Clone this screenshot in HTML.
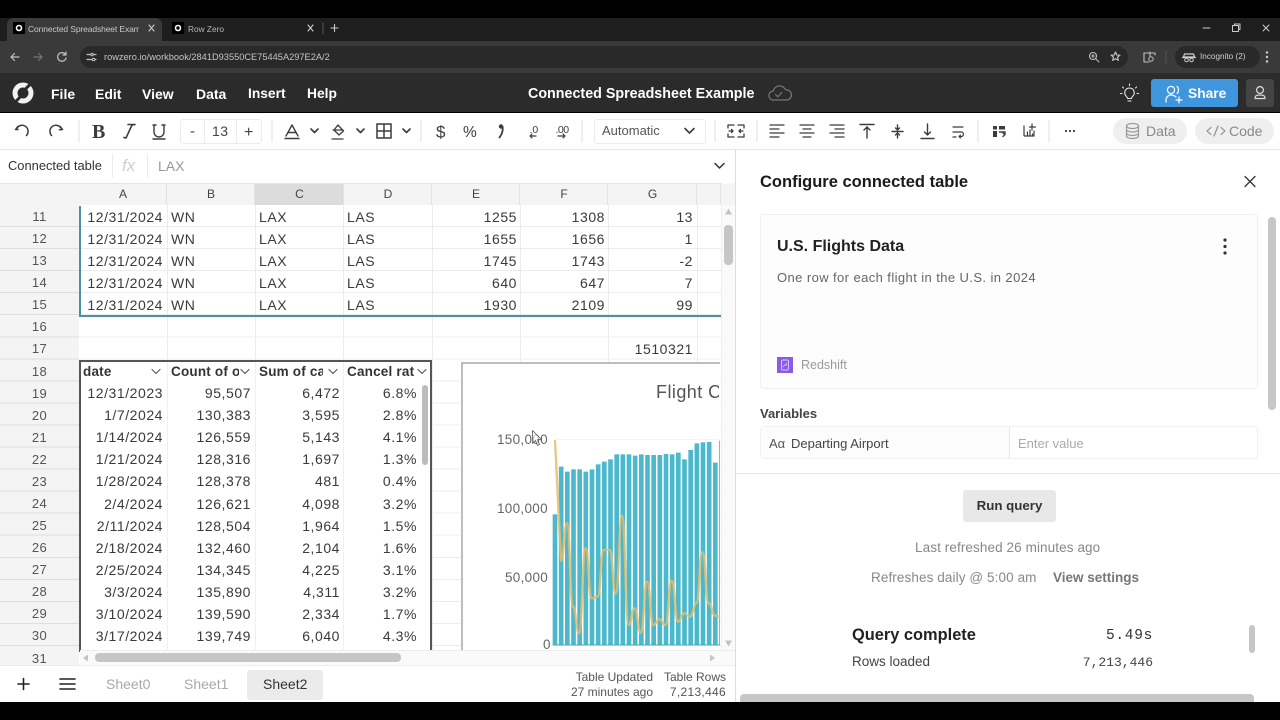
<!DOCTYPE html>
<html><head><meta charset="utf-8">
<style>
html,body{margin:0;padding:0;background:#000;width:1280px;height:720px;overflow:hidden}
#p{position:relative;width:1280px;height:720px;overflow:hidden;background:#000;font-family:"Liberation Sans",sans-serif;color:#333}
.b{position:absolute}
.t{position:absolute;white-space:nowrap;line-height:20px;height:20px}
.w{color:#fff;font-weight:bold;font-size:14px}
.row{position:absolute;left:0;width:721px;height:22px;font-size:14px;letter-spacing:.55px;color:#3a3a3a}
.row span{position:absolute;top:1px;line-height:20px;white-space:nowrap}
.row .n{left:0;width:79px;text-align:center;font-size:13px;letter-spacing:.4px;color:#555}
.row .n2{top:2px}
.ra{right:558px}.rb{right:470px}.rc{right:381px}.rd{right:304px}
.re{right:204px}.rf{right:116px}.rg{right:28px}
.lb{left:171px}.lc{left:259px}.ld{left:347px}
.ch{position:absolute;top:184px;height:21px;line-height:21px;text-align:center;font-size:12px;color:#444;background:#f4f4f4;border-right:1px solid #e2e2e2;box-sizing:border-box;padding-left:1px}
.hd{font-weight:bold;font-size:13.5px;letter-spacing:.2px;color:#333;overflow:hidden}
svg{position:absolute;left:0;top:0}
</style></head><body><div id="p">

<!-- browser chrome -->
<div class="b" style="left:0;top:18px;width:1280px;height:23px;background:#1e1e1e"></div>
<div class="b" style="left:7px;top:18px;width:155px;height:24px;background:#3a3a3a;border-radius:7px 7px 0 0"></div>
<div class="b" style="left:0;top:41px;width:1280px;height:32px;background:#3a3a3a"></div>
<div class="b" style="left:80px;top:46px;width:1048px;height:22px;background:#292929;border-radius:11px"></div>
<div class="b" style="left:1175px;top:46px;width:85px;height:22px;background:#292929;border-radius:11px"></div>
<div class="b" style="left:13px;top:22px;width:12px;height:12px;background:#000"></div>
<div class="b" style="left:172px;top:22px;width:12px;height:12px;background:#000"></div>
<div class="t" style="left:28px;top:19px;font-size:8.5px;letter-spacing:-.12px;color:#c8c8c8;width:111px;overflow:hidden">Connected Spreadsheet Example</div>
<div class="t" style="left:188px;top:19px;font-size:8.3px;color:#b8b8b8">Row Zero</div>
<div class="t" style="left:104px;top:47px;font-size:9.25px;color:#c4c4c4">rowzero.io/workbook/2841D93550CE75445A297E2A/2</div>
<div class="t" style="left:1200px;top:47px;font-size:8.2px;color:#cfcfcf">Incognito (2)</div>

<!-- app header -->
<div class="b" style="left:0;top:73px;width:1280px;height:39px;background:#2b2b2b"></div>
<div class="t w" style="left:51px;top:84px">File</div>
<div class="t w" style="left:95px;top:84px">Edit</div>
<div class="t w" style="left:142px;top:84px">View</div>
<div class="t w" style="left:196px;top:84px">Data</div>
<div class="t w" style="left:248px;top:84px;font-size:13.8px">Insert</div>
<div class="t w" style="left:307px;top:84px;font-size:13.8px">Help</div>
<div class="t w" style="left:528px;top:84px;font-size:14.3px">Connected Spreadsheet Example</div>
<div class="b" style="left:1151px;top:79px;width:87px;height:28px;background:#3f96dc;border-radius:3px"></div>
<div class="t w" style="left:1188px;top:84px;font-size:13.8px">Share</div>
<div class="b" style="left:1246px;top:79px;width:28px;height:28px;background:#444;border-radius:3px"></div>

<!-- toolbar -->
<div class="b" style="left:0;top:113px;width:1280px;height:36px;background:#fff;border-bottom:1px solid #e6e6e6"></div>
<div class="b" style="left:180px;top:119px;width:80px;height:23px;border:1px solid #ececec;border-radius:3px"></div>
<div class="b" style="left:204px;top:119px;width:1px;height:25px;background:#ececec"></div>
<div class="b" style="left:236px;top:119px;width:1px;height:25px;background:#ececec"></div>
<div class="t" style="left:190px;top:122px;font-size:15px;color:#444">-</div>
<div class="t" style="left:212px;top:121px;font-size:14px;letter-spacing:.5px;color:#444">13</div>
<div class="t" style="left:244px;top:123px;font-size:16px;color:#444">+</div>
<div class="b" style="left:594px;top:119px;width:110px;height:23px;border:1px solid #ececec;border-radius:3px"></div>
<div class="t" style="left:602px;top:121px;font-size:13px;color:#555">Automatic</div>
<div class="b" style="left:1113px;top:118px;width:74px;height:26px;background:#efefef;border-radius:13px"></div>
<div class="b" style="left:1195px;top:118px;width:79px;height:26px;background:#efefef;border-radius:13px"></div>
<div class="t" style="left:1146px;top:121px;font-size:14px;color:#888">Data</div>
<div class="t" style="left:1229px;top:121px;font-size:14px;color:#888">Code</div>

<!-- formula bar -->
<div class="b" style="left:0;top:150px;width:735px;height:33px;background:#fff"></div>
<div class="t" style="left:8px;top:156px;font-size:12.9px;color:#333">Connected table</div>
<div class="t" style="left:122px;top:156px;font-size:17px;font-style:italic;color:#cfcfcf">fx</div>
<div class="t" style="left:158px;top:156px;font-size:14px;color:#999">LAX</div>
<div class="b" style="left:112px;top:154px;width:1px;height:24px;background:#ececec"></div>
<div class="b" style="left:147px;top:154px;width:1px;height:24px;background:#ececec"></div>

<!-- grid -->
<div class="b" style="left:0;top:183px;width:735px;height:482px;background:#fff"></div>
<div class="b" style="left:0;top:183px;width:721px;height:1px;background:#e4e4e4"></div>
<div class="b" style="left:0;top:184px;width:735px;height:21px;background:#f4f4f4"></div>
<div class="b" style="left:0;top:205px;width:79px;height:460px;background:repeating-linear-gradient(to bottom,#f4f4f4 0,#f4f4f4 21.05px,#dedede 21.05px,#dedede 22.05px)"></div>
<div class="b" style="left:80px;top:205px;width:641px;height:445px;background:repeating-linear-gradient(to bottom,#fff 0,#fff 21.05px,#ececec 21.05px,#ececec 22.05px)"></div>
<div class="b" style="left:167px;top:205px;width:1px;height:445px;background:#ececec"></div>
<div class="b" style="left:255px;top:205px;width:1px;height:445px;background:#ececec"></div>
<div class="b" style="left:343px;top:205px;width:1px;height:445px;background:#ececec"></div>
<div class="b" style="left:432px;top:205px;width:1px;height:445px;background:#ececec"></div>
<div class="b" style="left:520px;top:205px;width:1px;height:445px;background:#ececec"></div>
<div class="b" style="left:608px;top:205px;width:1px;height:445px;background:#ececec"></div>
<div class="b" style="left:697px;top:205px;width:1px;height:445px;background:#ececec"></div>

<div class="ch" style="left:79px;width:88px">A</div>
<div class="ch" style="left:167px;width:88px">B</div>
<div class="ch" style="left:255px;width:89px;background:#dcdcdc">C</div>
<div class="ch" style="left:344px;width:88px">D</div>
<div class="ch" style="left:432px;width:88px">E</div>
<div class="ch" style="left:520px;width:88px">F</div>
<div class="ch" style="left:608px;width:89px">G</div>
<div class="ch" style="left:697px;width:24px"></div>

<div class="row" style="top:206px"><span class="n">11</span><span class="ra">12/31/2024</span><span class="lb">WN</span><span class="lc">LAX</span><span class="ld">LAS</span><span class="re">1255</span><span class="rf">1308</span><span class="rg">13</span></div>
<div class="row" style="top:228px"><span class="n">12</span><span class="ra">12/31/2024</span><span class="lb">WN</span><span class="lc">LAX</span><span class="ld">LAS</span><span class="re">1655</span><span class="rf">1656</span><span class="rg">1</span></div>
<div class="row" style="top:250px"><span class="n">13</span><span class="ra">12/31/2024</span><span class="lb">WN</span><span class="lc">LAX</span><span class="ld">LAS</span><span class="re">1745</span><span class="rf">1743</span><span class="rg">-2</span></div>
<div class="row" style="top:272px"><span class="n">14</span><span class="ra">12/31/2024</span><span class="lb">WN</span><span class="lc">LAX</span><span class="ld">LAS</span><span class="re">640</span><span class="rf">647</span><span class="rg">7</span></div>
<div class="row" style="top:294px"><span class="n">15</span><span class="ra">12/31/2024</span><span class="lb">WN</span><span class="lc">LAX</span><span class="ld">LAS</span><span class="re">1930</span><span class="rf">2109</span><span class="rg">99</span></div>
<div class="row" style="top:316px"><span class="n">16</span></div>
<div class="row" style="top:338px"><span class="n">17</span><span class="rg">1510321</span></div>

<div class="b" style="left:79px;top:206px;width:2px;height:110px;background:#4f8fa3"></div>
<div class="b" style="left:79px;top:315px;width:642px;height:2px;background:#4f8fa3"></div>

<!-- pivot table -->
<div class="b" style="left:80px;top:361px;width:352px;height:289px;background:#fff"></div>
<div class="b" style="left:167px;top:361px;width:1px;height:289px;background:#f0f0f0"></div>
<div class="b" style="left:255px;top:361px;width:1px;height:289px;background:#f0f0f0"></div>
<div class="b" style="left:343px;top:361px;width:1px;height:289px;background:#f0f0f0"></div>
<div class="row" style="top:361px"><span class="n">18</span><span class="hd" style="left:83px">date</span><span class="hd" style="left:171px;width:68px">Count of o</span><span class="hd" style="left:259px;width:64px">Sum of car</span><span class="hd" style="left:347px;width:68px">Cancel rat</span></div>
<div class="row" style="top:382px"><span class="n n2">19</span><span class="ra">12/31/2023</span><span class="rb">95,507</span><span class="rc">6,472</span><span class="rd">6.8%</span></div>
<div class="row" style="top:404px"><span class="n n2">20</span><span class="ra">1/7/2024</span><span class="rb">130,383</span><span class="rc">3,595</span><span class="rd">2.8%</span></div>
<div class="row" style="top:426px"><span class="n n2">21</span><span class="ra">1/14/2024</span><span class="rb">126,559</span><span class="rc">5,143</span><span class="rd">4.1%</span></div>
<div class="row" style="top:448px"><span class="n n2">22</span><span class="ra">1/21/2024</span><span class="rb">128,316</span><span class="rc">1,697</span><span class="rd">1.3%</span></div>
<div class="row" style="top:470px"><span class="n n2">23</span><span class="ra">1/28/2024</span><span class="rb">128,378</span><span class="rc">481</span><span class="rd">0.4%</span></div>
<div class="row" style="top:493px"><span class="n">24</span><span class="ra">2/4/2024</span><span class="rb">126,621</span><span class="rc">4,098</span><span class="rd">3.2%</span></div>
<div class="row" style="top:515px"><span class="n">25</span><span class="ra">2/11/2024</span><span class="rb">128,504</span><span class="rc">1,964</span><span class="rd">1.5%</span></div>
<div class="row" style="top:537px"><span class="n">26</span><span class="ra">2/18/2024</span><span class="rb">132,460</span><span class="rc">2,104</span><span class="rd">1.6%</span></div>
<div class="row" style="top:559px"><span class="n">27</span><span class="ra">2/25/2024</span><span class="rb">134,345</span><span class="rc">4,225</span><span class="rd">3.1%</span></div>
<div class="row" style="top:581px"><span class="n">28</span><span class="ra">3/3/2024</span><span class="rb">135,890</span><span class="rc">4,311</span><span class="rd">3.2%</span></div>
<div class="row" style="top:603px"><span class="n">29</span><span class="ra">3/10/2024</span><span class="rb">139,590</span><span class="rc">2,334</span><span class="rd">1.7%</span></div>
<div class="row" style="top:625px"><span class="n">30</span><span class="ra">3/17/2024</span><span class="rb">139,749</span><span class="rc">6,040</span><span class="rd">4.3%</span></div>
<div class="row" style="top:648px"><span class="n">31</span></div>
<div class="b" style="left:79px;top:360px;width:349px;height:290px;border:2px solid #555;border-bottom:0;border-left-width:2px"></div>
<div class="b" style="left:422px;top:385px;width:6px;height:80px;background:#bcbcbc;border-radius:3px"></div>

<!-- chart -->
<div class="b" style="left:461px;top:362px;width:259px;height:288px;background:#fff;border-left:2px solid #bdbdbd;border-top:2px solid #bdbdbd;box-sizing:border-box"></div>
<div class="b" style="left:461px;top:363px;width:258px;height:287px;overflow:hidden">
<div class="t" style="left:195px;top:19px;font-size:18px;letter-spacing:.45px;color:#555">Flight C</div>
</div>
<div class="t" style="left:497px;top:430px;font-size:13.5px;letter-spacing:.3px;color:#666">150,000</div>
<div class="t" style="left:497px;top:499px;font-size:13.5px;letter-spacing:.3px;color:#666">100,000</div>
<div class="t" style="left:505px;top:568px;font-size:13.5px;letter-spacing:.3px;color:#666">50,000</div>
<div class="t" style="left:543px;top:635px;font-size:13.5px;letter-spacing:.3px;color:#666">0</div>
<svg class="chart" style="left:440px;top:350px" width="280" height="310" viewBox="0 0 840 930">
<line x1="345" y1="269" x2="840" y2="269" stroke="#eee" stroke-width="2"/>
<path fill="#4cb8cc" d="M338 885V493h14V885zM356.500 885V350h14V885zM375 885V365h14V885zM393.500 885V358h14V885zM412 885V358h14V885zM430.500 885V365h14V885zM449 885V358h14V885zM467.500 885V343h14V885zM486 885V335h14V885zM504.500 885V328h14V885zM523 885V313h14V885zM541.500 885V313h14V885zM560 885V313h14V885zM578.500 885V317h14V885zM597 885V313h14V885zM615.500 885V315h14V885zM634 885V315h14V885zM652.500 885V315h14V885zM671 885V312h14V885zM689.500 885V313h14V885zM708 885V308h14V885zM726.500 885V328h14V885zM745 885V300h14V885zM763.500 885V280h14V885zM782 885V277h14V885zM800.500 885V276h14V885zM819 885V338h14V885zM837.500 885V272h14V885z"/>
<line x1="338" y1="885" x2="840" y2="885" stroke="#3ba9bd" stroke-width="3"/>
<path fill="none" stroke="#e9bb68" stroke-opacity=".85" stroke-width="7" stroke-linejoin="round" d="M345 270L363 632C372 632 372 520 381 520C390 520 390 770 399 770C408 770 408 850 417 850C427 850 427 595 437 595C446 595 446 745 455 745C464 745 464 740 473 740C482 740 482 600 491 600C500 600 500 600 509 600C518 600 518 730 527 730C537 730 537 497 546 497C556 497 556 825 566 825C575 825 575 775 584 775C593 775 593 848 602 848C612 848 612 695 621 695C631 695 631 825 640 825C649 825 649 808 658 808C667 808 667 825 676 825C686 825 686 692 695 692C705 692 705 815 714 815C723 815 723 790 732 790C741 790 741 800 750 800C760 800 760 760 769 760C778 760 778 607 787 607C797 607 797 760 806 760C816 760 816 797 825 797L840 800"/>
</svg>

<!-- grid scrollbars -->
<div class="b" style="left:721px;top:183px;width:14px;height:482px;background:#fafafa;border-left:1px solid #eee;box-sizing:border-box"></div>
<div class="b" style="left:721px;top:184px;width:14px;height:21px;background:#f4f4f4"></div>
<div class="b" style="left:724px;top:225px;width:9px;height:40px;background:#c6c6c6;border-radius:4px"></div>
<div class="b" style="left:80px;top:650px;width:655px;height:15px;background:#fafafa;border-top:1px solid #ececec;box-sizing:border-box"></div>
<div class="b" style="left:95px;top:653px;width:306px;height:9px;background:#c6c6c6;border-radius:4px"></div>

<!-- status bar -->
<div class="b" style="left:0;top:665px;width:735px;height:37px;background:#fff;border-top:1px solid #eee;box-sizing:border-box"></div>
<div class="b" style="left:247px;top:670px;width:76px;height:30px;background:#ebebeb;border-radius:3px"></div>
<div class="t" style="left:106px;top:674px;font-size:14px;color:#a8a8a8">Sheet0</div>
<div class="t" style="left:184px;top:674px;font-size:14px;color:#a8a8a8">Sheet1</div>
<div class="t" style="left:263px;top:674px;font-size:14px;color:#333">Sheet2</div>
<div class="t" style="left:500px;width:153px;text-align:right;top:667px;font-size:12px;color:#555">Table Updated</div>
<div class="t" style="left:500px;width:153px;text-align:right;top:682px;font-size:12px;color:#555">27 minutes ago</div>
<div class="t" style="left:600px;width:126px;text-align:right;top:667px;font-size:12px;color:#555">Table Rows</div>
<div class="t" style="left:600px;width:126px;text-align:right;top:682px;font-size:12px;letter-spacing:.3px;color:#555">7,213,446</div>

<!-- right panel -->
<div class="b" style="left:735px;top:150px;width:545px;height:552px;background:#fff;border-left:1px solid #ddd;box-sizing:border-box"></div>
<div class="t" style="left:760px;top:172px;font-size:16.5px;font-weight:bold;color:#1a1a1a">Configure connected table</div>
<div class="b" style="left:760px;top:214px;width:498px;height:175px;background:#fdfdfd;border:1px solid #f0f0f0;border-radius:4px;box-sizing:border-box"></div>
<div class="t" style="left:777px;top:237px;font-size:16px;font-weight:bold;color:#222">U.S. Flights Data</div>
<div class="t" style="left:777px;top:268px;font-size:13px;letter-spacing:.41px;color:#666">One row for each flight in the U.S. in 2024</div>
<div class="b" style="left:777px;top:357px;width:16px;height:16px;background:#8a5ce6"></div>
<div class="t" style="left:801px;top:355px;font-size:12.5px;color:#999">Redshift</div>
<div class="t" style="left:760px;top:404px;font-size:13px;font-weight:bold;color:#444">Variables</div>
<div class="b" style="left:760px;top:426px;width:498px;height:33px;background:#fff;border:1px solid #f0f0f0;border-radius:4px;box-sizing:border-box"></div>
<div class="b" style="left:761px;top:427px;width:248px;height:31px;background:#fcfcfc;border-right:1px solid #e8e8e8"></div>
<div class="t" style="left:769px;top:434px;font-size:13px;color:#555">Aα</div>
<div class="t" style="left:791px;top:434px;font-size:13px;color:#444">Departing Airport</div>
<div class="t" style="left:1018px;top:434px;font-size:13px;color:#aaa">Enter value</div>
<div class="b" style="left:736px;top:473px;width:544px;height:1px;background:#e6e6e6"></div>
<div class="b" style="left:963px;top:490px;width:93px;height:32px;background:#e8e8e8;border-radius:3px"></div>
<div class="t" style="left:963px;width:93px;text-align:center;top:496px;font-size:13.3px;font-weight:bold;color:#333">Run query</div>
<div class="t" style="left:915px;top:538px;font-size:13.5px;letter-spacing:.1px;color:#888">Last refreshed 26 minutes ago</div>
<div class="t" style="left:871px;top:568px;font-size:13.5px;letter-spacing:.1px;color:#888">Refreshes daily @ 5:00 am</div>
<div class="t" style="left:1053px;top:568px;font-size:13.5px;font-weight:bold;color:#777">View settings</div>
<div class="t" style="left:852px;top:625px;font-size:16.4px;font-weight:bold;color:#222">Query complete</div>
<div class="t" style="left:1053px;width:100px;text-align:right;top:626px;font-size:14.5px;letter-spacing:.7px;font-family:'Liberation Mono',monospace;color:#333">5.49s</div>
<div class="t" style="left:852px;top:652px;font-size:13.5px;color:#444">Rows loaded</div>
<div class="t" style="left:1053px;width:100px;text-align:right;top:653px;font-size:13px;font-family:'Liberation Mono',monospace;color:#444">7,213,446</div>
<div class="b" style="left:1268px;top:217px;width:8px;height:193px;background:#c6c6c6;border-radius:4px"></div>
<div class="b" style="left:1249px;top:625px;width:6px;height:28px;background:#c6c6c6;border-radius:3px"></div>
<div class="b" style="left:740px;top:694px;width:514px;height:8px;background:#c6c6c6;border-radius:4px 4px 0 0"></div>

<!-- icon overlay -->
<svg width="1280" height="720" viewBox="0 0 1280 720" fill="none" stroke-linecap="round" stroke-linejoin="round">
<!-- favicons -->
<circle cx="19" cy="28" r="2.500" stroke="#fff" stroke-width="1.600"/>
<circle cx="178" cy="28" r="2.500" stroke="#fff" stroke-width="1.600"/>
<!-- tab controls -->
<path d="M149 25l5 6m0-6l-5 6M308 25l5 6m0-6l-5 6M331 28h7M334.500 24.500v7" stroke="#ccc" stroke-width="1.100"/>
<path d="M323 23v11" stroke="#555"/>
<path d="M1203 28h7M1232.500 25.500h6v6h-6zM1234.500 25.500v-1.500h5.500v5.500h-1.500M1263 25l6 6m0-6l-6 6" stroke="#ccc" stroke-width="1"/>
<!-- nav -->
<path d="M19 57h-8m3.500-3.500L11 57l3.500 3.500" stroke="#c0c0c0" stroke-width="1.200"/>
<path d="M34 57h8m-3.500-3.500L42 57l-3.500 3.500" stroke="#777" stroke-width="1.200"/>
<path d="M65.500 54.500a4.300 4.300 0 1 0 .6 3.500M66 52v3h-3" stroke="#c0c0c0" stroke-width="1.200"/>
<path d="M87 54.500h3M93 54.500h3M87 59.500h5M95 59.500h1" stroke="#c0c0c0" stroke-width="1.200"/>
<circle cx="92" cy="54.500" r="1.300" stroke="#c0c0c0"/><circle cx="93.500" cy="59.500" r="1.300" stroke="#c0c0c0"/>
<circle cx="1093" cy="56" r="3.500" stroke="#c0c0c0" stroke-width="1.100"/>
<path d="M1096 59l3 3M1091.500 56h3M1093 54.500v3" stroke="#c0c0c0" stroke-width="1"/>
<path d="M1115.500 52l1.300 3 3.200.2-2.500 2 .9 3.200-2.900-1.700-2.900 1.700.9-3.200-2.500-2 3.200-.2z" stroke="#c8c8c8" stroke-width="1.100"/>
<path d="M1150 53h-6v9h5M1150 53h5v2M1150 52v4" stroke="#c0c0c0" stroke-width="1.100"/>
<circle cx="1151" cy="59" r="2.200" stroke="#c0c0c0"/>
<path d="M1166 51v12" stroke="#555"/>
<path d="M1184.500 54h9l1 3h-11zM1182.500 57.500h13" stroke="#cfcfcf" stroke-width="1.200"/>
<circle cx="1186.500" cy="60" r="1.800" stroke="#cfcfcf"/><circle cx="1191.500" cy="60" r="1.800" stroke="#cfcfcf"/>
<g fill="#ccc"><circle cx="1267" cy="52.500" r="1.200"/><circle cx="1267" cy="57" r="1.200"/><circle cx="1267" cy="61.500" r="1.200"/></g>

<!-- logo -->
<circle cx="23" cy="93" r="10.500" fill="#f2f2f2"/>
<circle cx="23" cy="93" r="5.500" fill="#2b2b2b"/>
<path d="M31.500 83.500C28 86 26 88 23.500 92c-2.500 4-4.500 7-8.500 10" stroke="#2b2b2b" stroke-width="3"/>
<!-- cloud -->
<path d="M775 100h-1.500a4.500 4.500 0 0 1-.3-9 6.500 6.500 0 0 1 12.300-1.200 5 5 0 0 1 1.500 10.200z" stroke="#777" stroke-width="1.200"/>
<path d="M775.500 94.500l2.300 2.300 4-4.300" stroke="#777" stroke-width="1.200"/>
<!-- bulb -->
<path d="M1129.500 88a4.800 4.800 0 0 0-3 8.500c.8.700 1 1.500 1 2h4c0-.5.200-1.300 1-2a4.800 4.800 0 0 0-3-8.500zM1128 101h3M1129.500 85.500v-1.500M1123.500 88l-1-1M1135.500 88l1-1M1122 93.500h-1.500M1138.500 93.500H1137" stroke="#e8e8e8" stroke-width="1.100"/>
<!-- share icon -->
<circle cx="1171" cy="90" r="3.600" stroke="#fff" stroke-width="1.200"/>
<path d="M1177 86.500c2 1 2 6 0 7M1166 102v-2c0-3 2.500-5 5-5s4 1 5 2M1176 100h6M1179 97v6" stroke="#fff" stroke-width="1.200"/>
<!-- user -->
<circle cx="1260" cy="90" r="3.400" stroke="#ddd" stroke-width="1.200"/>
<path d="M1255 98.500c0-2.500 1-3.500 5-3.500s5 1 5 3.500z" stroke="#ddd" stroke-width="1.200"/>

<!-- toolbar icons -->
<g stroke="#3c3c3c" stroke-width="1.500">
<path d="M18 127l-2.500 2.500 2.500 0M16 129c2-3.500 6-4.500 9-3 3.500 2 4 6.500 1.500 9.500"/>
<path d="M60 127l2.500 2.500-3 .3M62 129c-2-3.500-6-4.500-9-3-3.500 2-4 6.500-1.500 9.500"/>
<path d="M154 125v7a5 5 0 0 0 10 0v-7M153 125h3M162 125h3M153 139h12" stroke-width="1.400"/>
<path d="M124 137.500l2 .5 6-13 3-.5M128 124.500h7" stroke-width="1.600" stroke-linejoin="miter"/>
<path d="M286 136l6-11 6 11M288 132.500h8M285 138.500h14" stroke-width="1.400"/>
<path d="M311 129l3.500 3.500 3.500-3.500M357 129l3.500 3.500 3.500-3.500M403 129l3.500 3.500 3.500-3.500" stroke-width="1.600"/>
<path d="M338 125l5.500 6-4.500 4-5-5zM332 139h11M333 130h10" stroke-width="1.300"/>
<path d="M377 124h14v14h-14zM384 124v14M377 131h14" stroke-width="1.500" stroke-linejoin="miter"/>
<path d="M685 128.500l4.500 4.500 4.500-4.500" stroke-width="1.600"/>
<path d="M728 128v-3h6M744 128v-3h-6M728 134v3h6M744 134v3h-6M729 131h4m-1.500-1.500l1.500 1.500-1.500 1.500M743 131h-4m1.500-1.500l-1.500 1.500 1.500 1.500" stroke-width="1.300"/>
<path d="M770 125h14M770 129h9M770 133h14M770 137h9M800 125h14M803 129h8M800 133h14M803 137h8M830 125h14M835 129h9M830 133h14M835 137h9" stroke-width="1.300"/>
<path d="M860 124.500h14M867 138v-11m-3 3l3-3 3 3M892 131.500h11M897.500 125v5m-2-2l2 2 2-2M897.500 138v-5m-2 2l2-2 2 2M921 138.500h13M927.500 124v11m-3-3l3 3 3-3" stroke-width="1.400"/>
<path d="M953 127h10M953 132h8.500c2.500 0 2.500 4.500 0 4.500h-2.500m1.500-1.500l-1.500 1.500 1.500 1.500M953 137h3" stroke-width="1.200"/>
<path d="M1024 126v9a1 1 0 0 0 1 1h9v-5M1027.500 136v-4M1030 136v-6M1032.500 136v-2M1032 124v6M1029.500 127h6" stroke-width="1.200"/>
</g>
<g fill="#3c3c3c">
<text x="92" y="138" font-family="'Liberation Serif',serif" font-size="20" font-weight="bold">B</text>
<text x="436" y="137.500" font-family="'Liberation Sans',sans-serif" font-size="17">$</text>
<text x="463" y="137" font-family="'Liberation Sans',sans-serif" font-size="15.500">%</text>
<text x="529.500" y="133" font-family="'Liberation Sans',sans-serif" font-size="10.500">.0</text>
<text x="555.500" y="133" font-family="'Liberation Sans',sans-serif" font-size="10.500" letter-spacing="-.5">.00</text>
<rect x="993" y="126" width="4" height="3.500"/><rect x="999" y="126" width="6" height="3.500"/><rect x="993" y="131" width="4" height="6"/>
<circle cx="1066" cy="131" r="1.100"/><circle cx="1070" cy="131" r="1.100"/><circle cx="1074" cy="131" r="1.100"/>
<circle cx="501" cy="126.500" r="2.200"/>
</g>
<path d="M502.500 126.500c.8 4-.8 8-3 11" stroke="#3c3c3c" stroke-width="1.800"/>
<path d="M536 136h-6m2-2l-2 2 2 2M558 136h7m-2-2l2 2-2 2" stroke="#3c3c3c" stroke-width="1.200"/>
<path d="M999.500 132h5.500v2.500l-2 2m0-3.500l2 1.500" stroke="#3c3c3c" stroke-width="1.400"/>
<g stroke="#e2e2e2"><path d="M79 120v22M272 120v22M421 120v22M582 120v22M715 120v22M757 120v22M978 120v22M1049 120v22"/></g>
<!-- data/code pills -->
<g stroke="#999" stroke-width="1.200"><ellipse cx="1132.500" cy="126" rx="6" ry="2.500"/><path d="M1126.500 126v10c0 3.300 12 3.300 12 0v-10M1126.500 129.500c0 3.300 12 3.300 12 0M1126.500 133c0 3.300 12 3.300 12 0"/></g>
<path d="M1211 127.500l-4 3.500 4 3.500M1221 127.500l4 3.500-4 3.500M1218 126l-4 10" stroke="#888" stroke-width="1.100"/>
<!-- formula chevron -->
<path d="M715 163.500l4.500 4.500 4.500-4.500" stroke="#333" stroke-width="1.500"/>
<!-- table filter chevrons -->
<path d="M152 369.500l4 4 4-4M241 369.500l4 4 4-4M329 369.500l4 4 4-4M418 369.500l4 4 4-4" stroke="#555" stroke-width="1.100"/>
<!-- scrollbar arrows -->
<g fill="#c4c4c4"><path d="M728.500 208.500l3.500 6h-7zM725 640.500h7l-3.500 6zM88 654.500v7l-5-3.500zM710 654.500v7l5-3.500z"/></g>
<!-- cursor -->
<path d="M532.500 430.500v13l3-3 2 5 2-1-2-5h4z" fill="#fff" fill-opacity=".6" stroke="#555" stroke-width=".8"/>
<!-- status -->
<path d="M18 684h11M23.500 678.500v11" stroke="#222" stroke-width="1.600"/>
<path d="M60 679h15M60 684h15M60 689h15" stroke="#222" stroke-width="1.600"/>
<!-- panel -->
<path d="M1245 176.500l10 10m0-10l-10 10" stroke="#333" stroke-width="1.300"/>
<g fill="#333"><circle cx="1225" cy="240" r="1.600"/><circle cx="1225" cy="246.500" r="1.600"/><circle cx="1225" cy="253" r="1.600"/></g>
<rect x="781.500" y="360" width="7" height="10" rx="1.500" stroke="#d8c8fa"/>
<path d="M783 367l2-2.500 1 1 1-2.500" stroke="#d8c8fa" stroke-width=".8"/>
</svg>

</div></body></html>
